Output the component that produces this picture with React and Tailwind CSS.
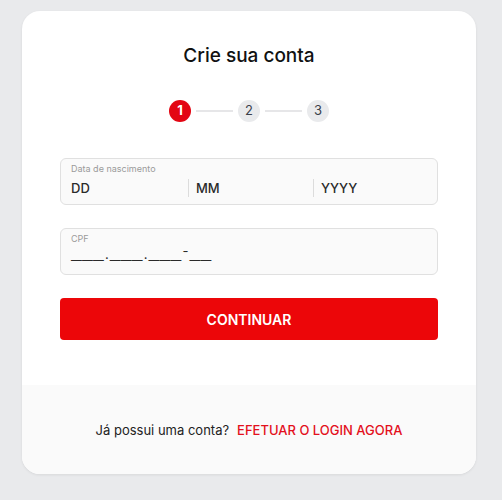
import React, { useState } from "react";

function Stepper({ step }) {
  const steps = [1, 2, 3];
  return (
    <div className="flex items-center justify-center">
      {steps.map((n, i) => (
        <React.Fragment key={n}>
          {i > 0 && <div className="mx-[5px] h-[2px] w-[37px] bg-[#e6e6e8]" />}
          <div
            className={
              n === step
                ? "flex h-[22px] w-[22px] items-center justify-center rounded-full bg-[#e30613] text-[13px] font-bold text-white"
                : "flex h-[22px] w-[22px] items-center justify-center rounded-full bg-[#e9eaec] text-[13px] text-[#3a3f4a]"
            }
          >
            {n}
          </div>
        </React.Fragment>
      ))}
    </div>
  );
}

// cpf mask: wide underscores like the original font
function CpfMask() {
  const groups = ["___", ".", "___", ".", "___", "-", "__"];
  return (
    <div className="flex items-baseline leading-[12px] text-[#2a2a2a]">
      {groups.map((g, i) =>
        g.startsWith("_") ? (
          <span key={i} className="font-['Liberation_Mono',monospace] text-[18px] font-bold tracking-[0.2px]">
            {g}
          </span>
        ) : (
          <span key={i} className={g === "-" ? "relative top-[-3px] px-[1px] text-[13px]" : "px-[1px] text-[13px]"}>
            {g}
          </span>
        )
      )}
    </div>
  );
}

export default function App() {
  const [step] = useState(1);

  return (
    <div
      className="min-h-[500px] bg-[#e9eaec] pl-[22px] pr-[26px] pt-[11px] pb-[27px]"
      style={{ fontFamily: "Inter, 'Noto Sans', sans-serif" }}
    >
      <div className="overflow-hidden rounded-[18px] bg-white shadow-[0_1px_3px_rgba(0,0,0,0.08)]">
        <div className="px-[38px] pt-[33px] pb-[45px]">
          <h1 className="text-center text-[19px] font-medium leading-[24px] text-[#111]">
            Crie sua conta
          </h1>

          <div className="mt-[32px]">
            <Stepper step={step} />
          </div>

          <div className="mt-[36px] h-[47px] rounded-[6px] border border-[#e0e0e0] bg-[#fafafa] px-[10px] pt-[4px]">
            <div className="text-[9px] leading-[12px] text-[#9a9a9a]">Data de nascimento</div>
            <div className="mt-[3px] flex items-center text-[13px] font-medium leading-[20px] text-[#2a2a2a]">
              <div className="w-[117px]">DD</div>
              <div className="flex w-[125px] items-center">
                <span className="mr-[7px] h-[18px] w-px bg-[#dcdcdc]" />
                MM
              </div>
              <div className="flex flex-1 items-center">
                <span className="mr-[7px] h-[18px] w-px bg-[#dcdcdc]" />
                YYYY
              </div>
            </div>
          </div>

          <div className="mt-[23px] h-[47px] rounded-[6px] border border-[#e0e0e0] bg-[#fafafa] px-[10px] pt-[4px]">
            <div className="text-[9px] leading-[12px] text-[#9a9a9a]">CPF</div>
            <div className="mt-[3px]">
              <CpfMask />
            </div>
          </div>

          <button className="mt-[23px] flex h-[42px] w-full items-center justify-center rounded-[4px] bg-[#ec0609] text-[14px] font-semibold text-white">
            CONTINUAR
          </button>
        </div>

        <div className="flex h-[89px] items-center justify-center bg-[#fafafa] pt-[3px] text-[13px]">
          <span className="text-[#222]">Já possui uma conta?</span>
          <a href="#" className="ml-[8px] font-medium text-[#e3101c]">
            EFETUAR O LOGIN AGORA
          </a>
        </div>
      </div>
    </div>
  );
}
